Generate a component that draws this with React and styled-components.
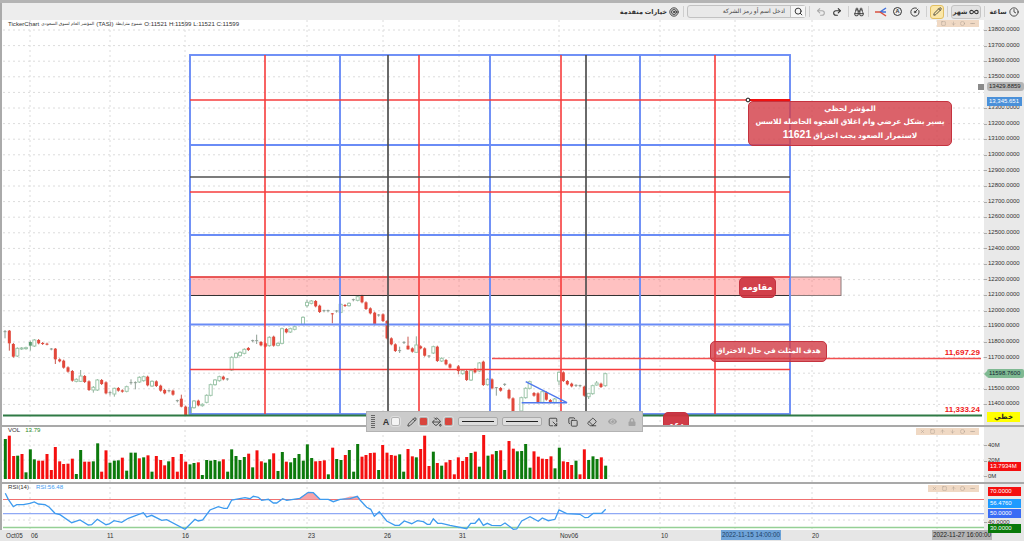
import React from "react";
import styled, { createGlobalStyle } from "styled-components";
import {
  Clock,
  Pencil,
  CircleGauge,
  Binoculars,
  Undo2,
  Redo2,
  Search,
  Target,
  Square,
  ArrowDown,
  ArrowUp,
  X,
  Circle,
  MoreHorizontal,
  Infinity as InfinityIcon,
  PaintBucket,
  Copy,
  Eraser,
  SquareArrowOutDownRight,
} from "lucide-react";
import { FaEye, FaLock } from "react-icons/fa";

const GlobalStyle = createGlobalStyle`
  html, body { margin: 0; padding: 0; background: #fff; }
  body { font-family: "Liberation Sans", "DejaVu Sans", sans-serif; overflow: hidden; }
`;

// date grid, same in all three panes
const GRID_X = [30, 110, 185, 307, 383, 459, 559, 660, 735, 812, 937];

const PRICES = [];
for (let p = 13800; p >= 11400; p -= 100) PRICES.push(p);
// these two sit right under a price tag
const COVERED = [13400, 11600];

// candles read off the picture: [x, top, bottom, kind, wickTop, wickBottom] in 3x crop pixels
const SEG_A = [
  [15, 35, 37, "d", 30, 55], [28, 32, 70, "r", 30, 92], [40, 72, 110, "r"], [52, 85, 108, "g"], [65, 84, 87, "g"],
  [78, 83, 86, "g"], [91, 66, 77, "f", 62, 92], [103, 60, 78, "g"], [116, 60, 70, "r"], [128, 69, 72, "r"], [141, 71, 73, "r"],
  [154, 87, 88, "d"], [166, 86, 118, "r", 84, 132], [179, 118, 124, "r"], [191, 122, 143, "r"], [204, 142, 155, "r"],
  [217, 153, 182, "r"], [229, 178, 184, "g"], [242, 168, 184, "g", 150, 186], [254, 168, 186, "r"], [267, 184, 210, "r"],
  [280, 202, 210, "g", 198, 218], [292, 180, 210, "g"], [305, 180, 192, "r"], [318, 187, 220, "r"], [330, 218, 220, "d", 214, 226],
  [343, 205, 222, "g", 203, 230], [355, 204, 212, "r"], [367, 211, 215, "r"], [380, 200, 214, "g"], [393, 188, 190, "d", 178, 194],
  [406, 188, 190, "d", 184, 208], [418, 172, 186, "g"], [431, 170, 182, "g"], [443, 170, 196, "r"], [456, 184, 198, "g"],
  [469, 184, 198, "r"], [482, 197, 212, "r"], [494, 210, 220, "r"], [507, 212, 214, "d"], [519, 212, 224, "r"], [532, 242, 244, "d"],
  [544, 236, 260, "r", 224, 262], [557, 260, 285, "r"], [570, 262, 283, "g"], [582, 243, 263, "g"], [595, 242, 256, "r"],
  [607, 253, 257, "g"], [620, 226, 247, "g"], [632, 194, 226, "g"], [645, 180, 194, "g"], [658, 170, 182, "g"], [670, 170, 178, "r"],
  [682, 177, 179, "d"], [695, 112, 150, "g"], [708, 100, 112, "g"], [720, 97, 107, "g"], [733, 88, 100, "g"], [745, 84, 90, "r"],
  [758, 62, 64, "d"], [770, 62, 64, "d", 44, 72], [783, 66, 76, "r"], [796, 70, 80, "r"], [808, 52, 77, "g"], [821, 50, 77, "r"],
  [834, 70, 76, "g"], [846, 26, 70, "g"], [859, 27, 37, "r"], [871, 26, 36, "g"], [884, 20, 28, "g"],
];

const SEG_B = [
  [369, 97, 118, "g"], [381, 52, 62, "g", 44, 68], [394, 48, 55, "g"], [407, 48, 64, "r"], [419, 62, 81, "r"], [432, 77, 79, "d"],
  [444, 77, 79, "d"], [457, 85, 88, "r", 84, 115], [470, 78, 80, "d"], [482, 58, 82, "g"], [495, 60, 63, "r"], [507, 55, 62, "g"],
  [520, 44, 46, "d"], [533, 35, 46, "g"], [546, 32, 52, "r"], [558, 52, 72, "r"], [571, 70, 85, "r"], [584, 83, 118, "r"],
  [596, 90, 92, "d"], [609, 88, 108, "r"], [621, 108, 160, "r"], [634, 160, 178, "r"], [646, 178, 198, "r"], [659, 197, 199, "d", 185, 204],
  [672, 172, 174, "d"], [684, 182, 193, "r", 155, 194],
];

const SEG_C = [
  [97, 70, 80, "r"], [109, 60, 82, "g", 34, 82], [122, 64, 70, "r"], [134, 70, 92, "r"], [147, 93, 95, "d"], [160, 65, 84, "g"],
  [172, 65, 108, "r"], [185, 100, 108, "g"], [198, 105, 118, "r"], [210, 118, 128, "r"], [235, 124, 138, "r", 120, 148],
  [248, 136, 146, "g"], [260, 138, 165, "r"], [273, 137, 165, "g"], [285, 132, 142, "r"], [298, 114, 138, "g"], [310, 110, 180, "r"],
  [323, 163, 179, "g"], [336, 163, 190, "r"], [349, 188, 190, "d", 186, 212], [362, 189, 197, "r"], [374, 178, 180, "d"],
  [387, 195, 220, "r"], [399, 220, 258, "r"], [424, 218, 258, "g"], [437, 190, 218, "g"], [449, 170, 190, "g"], [462, 204, 212, "r"],
  [474, 205, 232, "r"], [487, 200, 232, "g"], [499, 202, 224, "r"], [511, 225, 232, "r"], [524, 222, 232, "g"],
  [537, 142, 168, "g", 140, 180], [550, 142, 168, "r"], [562, 168, 178, "r"], [575, 176, 184, "r"], [588, 181, 183, "d"],
  [600, 182, 184, "d"], [613, 185, 212, "r"], [626, 205, 215, "g", 205, 222], [638, 182, 206, "g"], [650, 174, 180, "g", 168, 182],
  [663, 176, 186, "r"], [676, 146, 182, "g"],
];

// volume bars: [x, top] in 3x crop pixels, second list starts at x 340
const VOL_A = [
  [16, 57, "g"], [28, 47, "r"], [41, 108, "r"], [53, 107, "g"], [66, 102, "r"], [78, 157, "g"], [91, 88, "g"], [103, 118, "g"],
  [116, 122, "r"], [128, 122, "r"], [141, 102, "r"], [154, 150, "r"], [166, 81, "r"], [179, 124, "r"], [191, 132, "r"], [204, 131, "r"],
  [217, 116, "r"], [229, 162, "g"], [242, 90, "g"], [254, 125, "r"], [267, 125, "r"], [280, 124, "g"], [293, 70, "g"], [305, 155, "r"],
  [318, 91, "r"], [330, 128, "g"], [343, 122, "g"], [355, 121, "g"], [367, 113, "r"], [380, 152, "g"], [393, 98, "g"], [406, 98, "g"],
  [418, 115, "r"], [431, 112, "g"], [444, 106, "r"], [456, 155, "g"], [469, 108, "r"], [482, 120, "r"], [494, 136, "r"], [506, 124, "g"],
  [519, 111, "r"], [532, 155, "r"], [544, 102, "r"], [557, 125, "r"], [570, 133, "g"], [582, 129, "g"], [595, 127, "r"], [607, 165, "g"],
  [620, 120, "g"], [632, 122, "g"], [645, 120, "g"], [658, 124, "g"], [670, 118, "r"], [683, 155, "g"], [695, 88, "g"], [708, 108, "g"],
  [720, 120, "g"], [733, 111, "g"], [746, 101, "r"], [758, 142, "g"], [771, 91, "r"], [784, 124, "r"], [796, 128, "g"], [809, 118, "g"],
  [821, 100, "r"], [834, 153, "g"], [847, 96, "g"], [859, 125, "r"], [872, 127, "g"], [884, 114, "g"], [897, 102, "g"], [910, 122, "g"],
  [922, 73, "g"], [935, 114, "g"], [947, 124, "r"], [960, 123, "r"], [973, 121, "r"], [985, 163, "g"], [998, 83, "r"], [1010, 117, "g"],
];

const VOL_B = [
  [3, 120, "g"], [16, 105, "r"], [28, 90, "g"], [41, 155, "g"], [53, 72, "g"], [66, 110, "r"], [78, 105, "r"], [91, 99, "r"], [103, 98, "r"],
  [116, 150, "g"], [128, 75, "r"], [141, 98, "r"], [154, 105, "r"], [166, 107, "r"], [179, 103, "g"], [191, 155, "g"], [204, 87, "r"],
  [217, 109, "r"], [229, 112, "g"], [242, 87, "r"], [254, 47, "r"], [267, 138, "r"], [280, 95, "g"], [292, 129, "r"], [305, 137, "g"],
  [318, 127, "r"], [330, 120, "r"], [343, 163, "r"], [355, 112, "r"], [368, 123, "r"], [380, 111, "r"], [393, 99, "g"], [406, 95, "r"],
  [418, 140, "g"], [431, 45, "r"], [444, 107, "g"], [457, 103, "r"], [469, 93, "g"], [482, 91, "r"], [494, 150, "g"], [507, 63, "r"],
  [520, 86, "r"], [532, 94, "g"], [545, 93, "g"], [557, 72, "g"], [570, 143, "g"], [582, 94, "r"], [595, 110, "r"], [607, 116, "r"],
  [620, 117, "r"], [633, 109, "r"], [645, 145, "g"], [658, 83, "g"], [670, 124, "r"], [683, 126, "r"], [695, 135, "r"], [708, 122, "g"],
  [720, 163, "r"], [733, 88, "r"], [746, 120, "g"], [759, 109, "g"], [771, 117, "g"], [784, 112, "r"], [797, 137, "g"],
];

const RSI_A = [
  [16, 220], [25, 238], [40, 260], [50, 254], [70, 254], [90, 250], [103, 246], [115, 252], [135, 254], [148, 262], [165, 280], [180, 284],
  [215, 308], [240, 300], [265, 315], [275, 314], [292, 298], [318, 314], [328, 312], [342, 302], [365, 307], [385, 295], [430, 278],
  [440, 291], [455, 286], [485, 301], [500, 299], [555, 328], [585, 298], [595, 303], [608, 300], [630, 270], [655, 260], [672, 265],
  [682, 265], [695, 240], [735, 233], [750, 236], [760, 229], [775, 232], [785, 241], [805, 238], [820, 249], [830, 249], [848, 236],
  [860, 241], [880, 238], [900, 235], [925, 217], [940, 218], [960, 238], [985, 238], [1000, 245], [1020, 238],
];

const RSI_B = [
  [30, 236], [52, 229], [60, 240], [80, 262], [92, 268], [103, 289], [118, 275], [140, 303], [165, 316], [178, 316], [193, 303], [215, 311],
  [232, 302], [250, 305], [262, 313], [270, 313], [280, 296], [293, 310], [305, 310], [330, 316], [380, 326], [392, 310], [405, 310],
  [417, 296], [430, 316], [442, 310], [455, 316], [482, 317], [495, 309], [520, 328], [530, 327], [545, 303], [570, 290], [595, 304],
  [607, 294], [625, 302], [645, 298], [657, 270], [680, 281], [720, 283], [735, 293], [745, 292], [760, 280], [785, 280], [797, 268],
];

const rsiPoints = [
  ...RSI_A.map(([x, y]) => [x / 3, 420 + y / 3]),
  ...RSI_B.map(([x, y]) => [340 + x / 3, 420 + y / 3]),
]
  .map((p) => p.map((n) => n.toFixed(1)).join(","))
  .join(" ");

const Page = styled.div`
  position: relative;
  width: 1024px;
  height: 541px;
  display: flex;
  flex-direction: column;
  overflow: hidden;
  border-top: 3px solid #b4b4b4;
  box-sizing: border-box;
  background: #fff;
`;

const Toolbar = styled.div`
  height: 17px;
  flex: none;
  display: flex;
  align-items: center;
  justify-content: flex-end;
  padding-right: 4px;
  background: #ededed;
  color: #333;
  border-left: 2px solid #aaa;
`;

const Sep = styled.span`
  width: 1px;
  height: 11px;
  margin: 0 3px;
  background: #cfcfcf;
`;

const ToolBtn = styled.span`
  width: ${(p) => p.$w || 17}px;
  height: 14px;
  display: flex;
  align-items: center;
  justify-content: center;
  gap: 2px;
  flex: none;
  box-sizing: border-box;
  font-size: 6.5px;
  font-weight: bold;
  color: ${(p) => (p.$muted ? "#aaa" : "#333")};
  white-space: nowrap;
`;

const ActiveBtn = styled(ToolBtn)`
  background: #fbe7a8;
  border: 1px solid #e2bf62;
  border-radius: 3px;
`;

const PressedBtn = styled(ToolBtn)`
  background: #e2e2e2;
  border: 1px solid #c4c4c4;
  border-radius: 3px;
`;

const CircledLetter = styled.span`
  width: 9px;
  height: 9px;
  box-sizing: border-box;
  border: 1.5px solid #333;
  border-radius: 50%;
  font-size: 5.5px;
  line-height: 6px;
  font-weight: bold;
  text-align: center;
`;

const ToolLabel = styled.span`
  font-size: 6.5px;
  font-weight: bold;
  margin-right: 1px;
  color: #333;
`;

const SearchBox = styled.div`
  width: 119px;
  height: 13px;
  flex: none;
  display: flex;
  box-sizing: border-box;
  border: 1px solid #c2c2c2;
  border-radius: 3px;
  background: #e9e9e9;
`;

const SearchText = styled.div`
  flex: 1;
  font-size: 6px;
  line-height: 11px;
  text-align: right;
  padding-right: 5px;
  color: #444;
`;

const SearchBtn = styled.div`
  width: 14px;
  display: flex;
  align-items: center;
  justify-content: center;
  border-left: 1px solid #c2c2c2;
  background: #f6f6f6;
`;

const Pane = styled.div`
  flex: none;
  height: ${(p) => p.$h}px;
  display: flex;
  box-sizing: border-box;
  border-top: ${(p) => (p.$sep ? "2px solid #a9a9a9" : "none")};
  border-left: 2px solid #aaa;
`;

const Plot = styled.div`
  position: relative;
  flex: 1;
  overflow: hidden;
  margin-left: 1px;
  background: #fff;
`;

const ChartSvg = styled.svg`
  display: block;
  width: 100%;
  height: 100%;
`;

const Axis = styled.div`
  position: relative;
  width: 40px;
  flex: none;
  box-sizing: border-box;
  padding-top: ${(p) => p.$pad}px;
  background: #e9e9e9;
`;

const AxisRow = styled.div`
  height: ${(p) => p.$h}px;
  line-height: ${(p) => p.$h}px;
  padding-left: ${(p) => p.$in || 4}px;
  font-size: 6px;
  color: #333;
  position: relative;
  visibility: ${(p) => (p.$covered ? "hidden" : "visible")};
  &::before {
    content: "";
    position: absolute;
    left: 0;
    top: 50%;
    width: 3px;
    height: 1px;
    background: #aaa;
  }
`;

const Tag = styled.div`
  position: absolute;
  z-index: 2;
  top: ${(p) => p.$y}px;
  left: ${(p) => p.$x ?? 4}px;
  right: ${(p) => p.$r ?? 2}px;
  height: 9px;
  line-height: 9px;
  padding-left: 2px;
  font-size: 6px;
  white-space: nowrap;
  color: ${(p) => p.$fg || "#fff"};
  background: ${(p) => p.$bg};
  border-radius: ${(p) => p.$round || 0}px;
`;

const LastPriceTag = styled(Tag)`
  &::before {
    content: "";
    position: absolute;
    left: -3px;
    top: 1.5px;
    border-style: solid;
    border-width: 3px 3px 3px 0;
    border-color: transparent #7fb992 transparent transparent;
  }
`;

const DrawingTag = styled(Tag)`
  height: 10px;
  line-height: 10px;
  padding: 0;
  text-align: center;
  font-size: 7px;
  font-weight: bold;
`;

const TagPin = styled.div`
  position: absolute;
  right: 0;
  top: 64px;
  width: 6px;
  height: 6px;
  background: #8a8a8a;
`;

const LegendRow = styled.div`
  position: absolute;
  left: 5px;
  top: 0;
  display: flex;
  align-items: center;
  gap: ${(p) => p.$gap || 5}px;
  font-size: 6.1px;
  line-height: ${(p) => p.$lh || 8}px;
  color: #333;
  white-space: nowrap;
`;

const LegendArabic = styled.span`
  font-size: 4.4px;
`;

const LegendValue = styled.span`
  color: ${(p) => p.$c};
`;

const PaneTools = styled.div`
  position: absolute;
  top: ${(p) => p.$top}px;
  right: 5px;
  height: 7px;
  display: flex;
  align-items: center;
  justify-content: space-around;
  width: ${(p) => p.$w}px;
  padding: 0 2px;
  box-sizing: border-box;
  background: #f0d9c4;
  color: #a59a8e;
`;

const Note = styled.div`
  position: absolute;
  box-sizing: border-box;
  color: #fff;
  background: rgba(211, 63, 73, 0.82);
  border: 1.5px solid #c5333f;
  border-radius: 5px;
  font-weight: bold;
  text-align: center;
  white-space: nowrap;
`;

const TrendCallout = styled(Note)`
  left: 745px;
  top: 81px;
  width: 204px;
  height: 45px;
  font-size: 7.4px;
  line-height: 13px;
`;

const CalloutNumber = styled.span`
  font-size: 10.5px;
`;

const ResistanceLabel = styled(Note)`
  left: 736px;
  top: 257px;
  width: 37px;
  height: 21px;
  line-height: 18px;
  font-size: 8.5px;
  background: rgba(205, 50, 62, 0.9);
`;

const TargetLabel = styled(Note)`
  left: 707px;
  top: 321px;
  width: 117px;
  height: 21px;
  line-height: 18px;
  font-size: 7.2px;
`;

const SupportLabel = styled(Note)`
  left: 660px;
  top: 392px;
  width: 26px;
  height: 24px;
  line-height: 24px;
  font-size: 8px;
  background: rgba(205, 50, 62, 0.95);
`;

const LevelText = styled.div`
  position: absolute;
  right: 4px;
  top: ${(p) => p.$top}px;
  font-size: 8px;
  line-height: 10px;
  font-weight: bold;
  color: #f01818;
`;

const FloatBar = styled.div`
  position: absolute;
  z-index: 3;
  left: 366px;
  top: 408px;
  width: 277px;
  height: 21px;
  box-sizing: border-box;
  display: flex;
  align-items: center;
  padding-left: 4px;
  background: #cbcbcb;
  border: 1px solid #b3b3b3;
  color: #333;
`;

const DragGrip = styled.span`
  width: 4px;
  height: 13px;
  flex: none;
  margin-right: 6px;
  background: repeating-linear-gradient(#666 0 1px, transparent 1px 2px);
`;

const Glyph = styled.span`
  width: ${(p) => p.$w || 12}px;
  display: flex;
  align-items: center;
  justify-content: center;
  flex: none;
  margin-right: ${(p) => p.$mr || 0}px;
  font-size: 9px;
  font-weight: bold;
  color: ${(p) => (p.$muted ? "#a3a3a3" : "#333")};
`;

const Swatch = styled.span`
  width: 9px;
  height: 9px;
  flex: none;
  box-sizing: border-box;
  margin-right: ${(p) => p.$mr || 0}px;
  border-radius: 2px;
  border: 1px solid #b3b3b3;
  outline: 1px solid #ddd;
  background: ${(p) => p.$c};
`;

const LinePicker = styled.span`
  width: 40px;
  height: 9px;
  flex: none;
  display: flex;
  align-items: center;
  padding: 0 3px;
  margin-right: 4px;
  box-sizing: border-box;
  border: 1px solid #aaa;
  border-radius: 2px;
  background: #ddd;
  &::before {
    content: "";
    width: 100%;
    border-top: ${(p) => p.$weight}px solid #222;
  }
`;

const TimeAxis = styled.div`
  position: relative;
  flex: none;
  height: 11px;
  background: #e6e6e6;
  overflow: hidden;
`;

const TimeLabel = styled.span`
  position: absolute;
  top: 0;
  left: ${(p) => p.$x}px;
  line-height: 11px;
  font-size: 6.3px;
  color: #333;
  white-space: nowrap;
`;

const TimeTag = styled(TimeLabel)`
  height: 10px;
  line-height: 10px;
  padding: 0 1px;
  background: ${(p) => p.$bg};
  color: ${(p) => p.$fg};
`;

const GridLines = ({ top, bottom, rows = [], width = 984 }) => (
  <g stroke="#dcdcdc" strokeWidth="1" strokeDasharray="2 3">
    {GRID_X.map((x) => (
      <line key={x} x1={x} x2={x} y1={top} y2={bottom} />
    ))}
    {rows.map((y) => (
      <line key={y} x1={3} x2={width} y1={y} y2={y} />
    ))}
  </g>
);

const Candle = ({ ox, oy, c }) => {
  const [zx, top, bot, kind, wt, wb] = c;
  const x = ox + zx / 3;
  const y1 = oy + top / 3;
  const y2 = oy + bot / 3;
  const wick = kind === "r" ? "#c9564c" : "#8fae98";
  const wickTop = wt !== undefined ? oy + wt / 3 : y1 - 1;
  const wickBot = wb !== undefined ? oy + wb / 3 : y2 + 1;
  if (kind === "d") {
    return (
      <g stroke="#8f9e94" strokeWidth="1">
        <line x1={x} x2={x} y1={wickTop} y2={wickBot} />
        <line x1={x - 1.5} x2={x + 1.5} y1={y1} y2={y1} />
      </g>
    );
  }
  return (
    <g>
      <line x1={x} x2={x} y1={wickTop} y2={wickBot} stroke={wick} strokeWidth="1" />
      {kind === "r" && <rect x={x - 1.5} y={y1} width="3" height={Math.max(y2 - y1, 1)} fill="#e2483b" />}
      {kind === "g" && (
        <rect x={x - 1.5} y={y1} width="3" height={Math.max(y2 - y1, 1)} fill="#fff" stroke="#9fc7ac" strokeWidth="1" />
      )}
      {kind === "f" && <rect x={x - 1.5} y={y1} width="3" height={y2 - y1} fill="#5a9a70" />}
    </g>
  );
};

const FRAME = "#6a8cf6";
const RED = "#f63c3c";
const INK = "#505050";

const MainDrawing = () => {
  const priceRows = PRICES.map((_, i) => 30 + i * 15.6);
  return (
    <ChartSvg viewBox="3 20 981 405" preserveAspectRatio="none">
      <GridLines top={20} bottom={425} rows={priceRows} />
      {SEG_A.map((c) => <Candle key={`a${c[0]}`} ox={0} oy={320} c={c} />)}
      {SEG_B.map((c) => <Candle key={`b${c[0]}`} ox={180} oy={285} c={c} />)}
      {SEG_C.map((c) => <Candle key={`c${c[0]}`} ox={380} oy={325} c={c} />)}

      <rect x="190" y="277" width="651" height="18.5" fill="#ff6b6b" fillOpacity="0.42" stroke="#8a7a7a" strokeWidth="1" />
      <line x1="190" x2="790" y1="295.5" y2="295.5" stroke="#333" strokeWidth="1" />

      <g stroke={FRAME} strokeWidth="1.9" fill="none">
        <rect x="190" y="55" width="600" height="359" />
        {[340, 490, 640].map((x) => <line key={x} x1={x} x2={x} y1="55" y2="414" />)}
        {[145, 235, 324.5].map((y) => <line key={y} x1="190" x2="790" y1={y} y2={y} />)}
      </g>
      <g stroke={RED} strokeWidth="1.6">
        {[265, 419, 561, 715].map((x) => <line key={x} x1={x} x2={x} y1="55" y2="414" />)}
        {[100, 192, 277, 369.5].map((y) => <line key={y} x1="190" x2="790" y1={y} y2={y} />)}
      </g>
      <g stroke={INK} strokeWidth="1.7">
        {[388, 586].map((x) => <line key={x} x1={x} x2={x} y1="55" y2="414" />)}
        <line x1="190" x2="790" y1="177" y2="177" />
      </g>

      <line x1="748" x2="790" y1="100" y2="100" stroke="#f01010" strokeWidth="1.8" />
      <circle cx="748" cy="100" r="1.9" fill="#fff" stroke="#111" strokeWidth="1" />
      <line x1="492" x2="981" y1="358.5" y2="358.5" stroke="#f45050" strokeWidth="1.4" />
      <polyline points="525.7,381.7 567,402.7 521.7,402.7" fill="none" stroke="#4f79ee" strokeWidth="1.4" />
      <line x1="3" x2="982" y1="415.6" y2="415.6" stroke="#2f7a45" strokeWidth="2" />
    </ChartSvg>
  );
};

const VolumeDrawing = () => (
  <ChartSvg viewBox="3 427 981 55" preserveAspectRatio="none">
    <GridLines top={425} bottom={482} rows={[445, 460, 476]} />
    {VOL_A.map(([x, t, k]) => (
      <rect key={`v${x}`} x={x / 3 - 1.5} y={420 + t / 3} width="3" height={479 - (420 + t / 3)} fill={k === "r" ? "#f50f0f" : "#0c7a0c"} />
    ))}
    {VOL_B.map(([x, t, k]) => (
      <rect key={`w${x}`} x={340 + x / 3 - 1.5} y={420 + t / 3} width="3" height={479 - (420 + t / 3)} fill={k === "r" ? "#f50f0f" : "#0c7a0c"} />
    ))}
  </ChartSvg>
);

const RsiDrawing = () => (
  <ChartSvg viewBox="3 484 981 46" preserveAspectRatio="none">
    <GridLines top={482} bottom={530} rows={[506, 520]} />
    <line x1="3" x2="984" y1="499.5" y2="499.5" stroke="#f07070" strokeWidth="1.2" />
    <line x1="3" x2="984" y1="513.7" y2="513.7" stroke="#8fa9f5" strokeWidth="1.2" />
    <line x1="3" x2="984" y1="527.5" y2="527.5" stroke="#95d095" strokeWidth="1.4" />
    <polygon points="297,499.5 308,492.3 313,492.6 320,499.5" fill="#f7a3a8" />
    <polygon points="340,499.5 350,496.6 358,496.4 361,499.5" fill="#f7a3a8" />
    <polyline points={rsiPoints} fill="none" stroke="#3d9bef" strokeWidth="1.3" />
  </ChartSvg>
);

// red and blue fork next to the "A" button, lucide has nothing close
const ForkIcon = () => (
  <svg width="12" height="10" viewBox="0 0 12 10" fill="none" strokeWidth="1.5">
    <path d="M0 5h5" stroke="#d9503f" />
    <path d="M5 5L11 1M5 5h6" stroke="#3f6fd9" />
    <path d="M5 5L11 9" stroke="#d9503f" />
  </svg>
);

const smallIcon = { size: 5, strokeWidth: 2 };

const App = () => (
  <Page>
    <GlobalStyle />
    <Toolbar>
      <ToolLabel>خيارات متقدمة</ToolLabel>
      <ToolBtn $w={12}><Target size={10} strokeWidth={2.2} /></ToolBtn>
      <Sep />
      <SearchBox>
        <SearchText>ادخل اسم أو رمز الشركة</SearchText>
        <SearchBtn><Search size={9} strokeWidth={2.6} /></SearchBtn>
      </SearchBox>
      <Sep />
      <ToolBtn $w={16} $muted><Undo2 size={10} strokeWidth={2.6} /></ToolBtn>
      <ToolBtn $w={16}><Redo2 size={10} strokeWidth={2.6} /></ToolBtn>
      <Sep />
      <ToolBtn $w={13}><Binoculars size={10} strokeWidth={2.2} /></ToolBtn>
      <Sep />
      <ToolBtn><ForkIcon /></ToolBtn>
      <ToolBtn><CircledLetter>A</CircledLetter></ToolBtn>
      <ToolBtn><CircleGauge size={10} strokeWidth={2.2} /></ToolBtn>
      <Sep />
      <ActiveBtn $w={14}><Pencil size={9} strokeWidth={2.2} /></ActiveBtn>
      <Sep />
      <PressedBtn $w={30}>
        شهر
        <InfinityIcon size={10} strokeWidth={2.6} />
      </PressedBtn>
      <Sep />
      <ToolBtn $w={32}>
        ساعة
        <Clock size={10} strokeWidth={2} />
      </ToolBtn>
    </Toolbar>

    <Pane $h={405}>
      <Plot>
        <MainDrawing />
        <LegendRow $gap={2}>
          <span>TickerChart</span>
          <LegendArabic>المؤشر العام لسوق السعودي</LegendArabic>
          <span>(TASI)</span>
          <LegendArabic>شموع مترابطة</LegendArabic>
          <span>O:11521 H:11599 L:11521 C:11599</span>
        </LegendRow>
        <TrendCallout>
          <div>المؤشر لحظي</div>
          <div>يسير بشكل عرضي وام اغلاق الفجوه الحاصله للاسس</div>
          <div>لاستمرار الصعود يجب اختراق <CalloutNumber>11621</CalloutNumber></div>
        </TrendCallout>
        <ResistanceLabel>مقاومه</ResistanceLabel>
        <TargetLabel>هدف المثلث في حال الاختراق</TargetLabel>
        <SupportLabel>دعم</SupportLabel>
        <LevelText $top={328}>11,697.29</LevelText>
        <LevelText $top={385}>11,333.24</LevelText>
        <TagPin />
        <PaneTools $top={0} $w={42}>
          <Square {...smallIcon} />
          <ArrowDown {...smallIcon} />
          <Circle {...smallIcon} />
          <MoreHorizontal {...smallIcon} />
        </PaneTools>
      </Plot>
      <Axis $pad={2.2}>
        {PRICES.map((p) => (
          <AxisRow key={p} $h={15.6} $covered={COVERED.includes(p)}>{p}.0000</AxisRow>
        ))}
        <Tag $y={62} $x={3} $r={0} $bg="#b5b5b5" $fg="#222" $round={3}>13429.8859</Tag>
        <Tag $y={77} $x={3} $r={2} $bg="#4a90d9">13,345.651</Tag>
        <LastPriceTag $y={349} $x={3} $r={0} $bg="#7fb992" $fg="#123" $round={2}>11598.7600</LastPriceTag>
        <DrawingTag $y={392} $x={3} $r={4} $bg="#ffff00" $fg="#222">خطي</DrawingTag>
      </Axis>
    </Pane>

    <Pane $h={57} $sep>
      <Plot>
        <VolumeDrawing />
        <LegendRow $lh={6}>
          <span>VOL</span>
          <LegendValue $c="#2a8a2a">13.79</LegendValue>
        </LegendRow>
        <PaneTools $top={1} $w={63}>
          <X {...smallIcon} />
          <Square {...smallIcon} />
          <ArrowUp {...smallIcon} />
          <ArrowDown {...smallIcon} />
          <Circle {...smallIcon} />
          <MoreHorizontal {...smallIcon} />
        </PaneTools>
      </Plot>
      <Axis $pad={10.5}>
        {["40M", "20M", "0M"].map((t) => (
          <AxisRow key={t} $h={15.5}>{t}</AxisRow>
        ))}
        <Tag $y={35} $x={4} $r={3} $bg="#f50f0f">13.7934M</Tag>
      </Axis>
    </Pane>

    <Pane $h={48} $sep>
      <Plot>
        <RsiDrawing />
        <LegendRow $gap={7} $lh={6}>
          <span>RSI(14)</span>
          <LegendValue $c="#3d9bef">RSI:56.48</LegendValue>
        </LegendRow>
        <PaneTools $top={1} $w={51}>
          <X {...smallIcon} />
          <Square {...smallIcon} />
          <ArrowUp {...smallIcon} />
          <Circle {...smallIcon} />
          <MoreHorizontal {...smallIcon} />
        </PaneTools>
      </Plot>
      <Axis $pad={17}>
        {["60.0000", "40.0000"].map((t) => (
          <AxisRow key={t} $h={14} $covered={t === "60.0000"}>{t}</AxisRow>
        ))}
        <Tag $y={3} $x={4} $r={3} $bg="#f50f0f">70.0000</Tag>
        <Tag $y={15} $x={4} $r={3} $bg="#1e9bff">56.4760</Tag>
        <Tag $y={25} $x={4} $r={3} $bg="#3a6cf5">50.0000</Tag>
        <Tag $y={39.5} $x={4} $r={3} $bg="#0a7a0a">30.0000</Tag>
      </Axis>
    </Pane>

    <TimeAxis>
      <TimeLabel $x={6}>Oct05</TimeLabel>
      <TimeLabel $x={31}>06</TimeLabel>
      <TimeLabel $x={107}>11</TimeLabel>
      <TimeLabel $x={182}>16</TimeLabel>
      <TimeLabel $x={308}>23</TimeLabel>
      <TimeLabel $x={384}>26</TimeLabel>
      <TimeLabel $x={459}>31</TimeLabel>
      <TimeLabel $x={560}>Nov06</TimeLabel>
      <TimeLabel $x={661}>10</TimeLabel>
      <TimeLabel $x={812}>20</TimeLabel>
      <TimeTag $x={721} $bg="#6fa3d8" $fg="#1e3f66">2022-11-15 14:00:00</TimeTag>
      <TimeTag $x={932} $bg="#b3b3b3" $fg="#222">2022-11-27 16:00:00</TimeTag>
    </TimeAxis>

    <FloatBar>
      <DragGrip />
      <Glyph $w={10}>A</Glyph>
      <Swatch $c="#f4f4f4" $mr={6} />
      <Glyph $mr={1}><Pencil size={10} strokeWidth={2} /></Glyph>
      <Swatch $c="#d9453d" $mr={3} />
      <Glyph $mr={1}><PaintBucket size={10} strokeWidth={2} /></Glyph>
      <Swatch $c="#d9453d" $mr={5} />
      <LinePicker $weight={1} />
      <LinePicker $weight={1.6} />
      <Glyph $w={14} $mr={6}><SquareArrowOutDownRight size={10} strokeWidth={2} /></Glyph>
      <Glyph $w={14} $mr={5}><Copy size={10} strokeWidth={2} /></Glyph>
      <Glyph $w={14} $mr={6}><Eraser size={10} strokeWidth={2} /></Glyph>
      <Glyph $w={14} $mr={6} $muted><FaEye size={9} /></Glyph>
      <Glyph $w={14} $muted><FaLock size={8} /></Glyph>
    </FloatBar>
  </Page>
);

export default App;
